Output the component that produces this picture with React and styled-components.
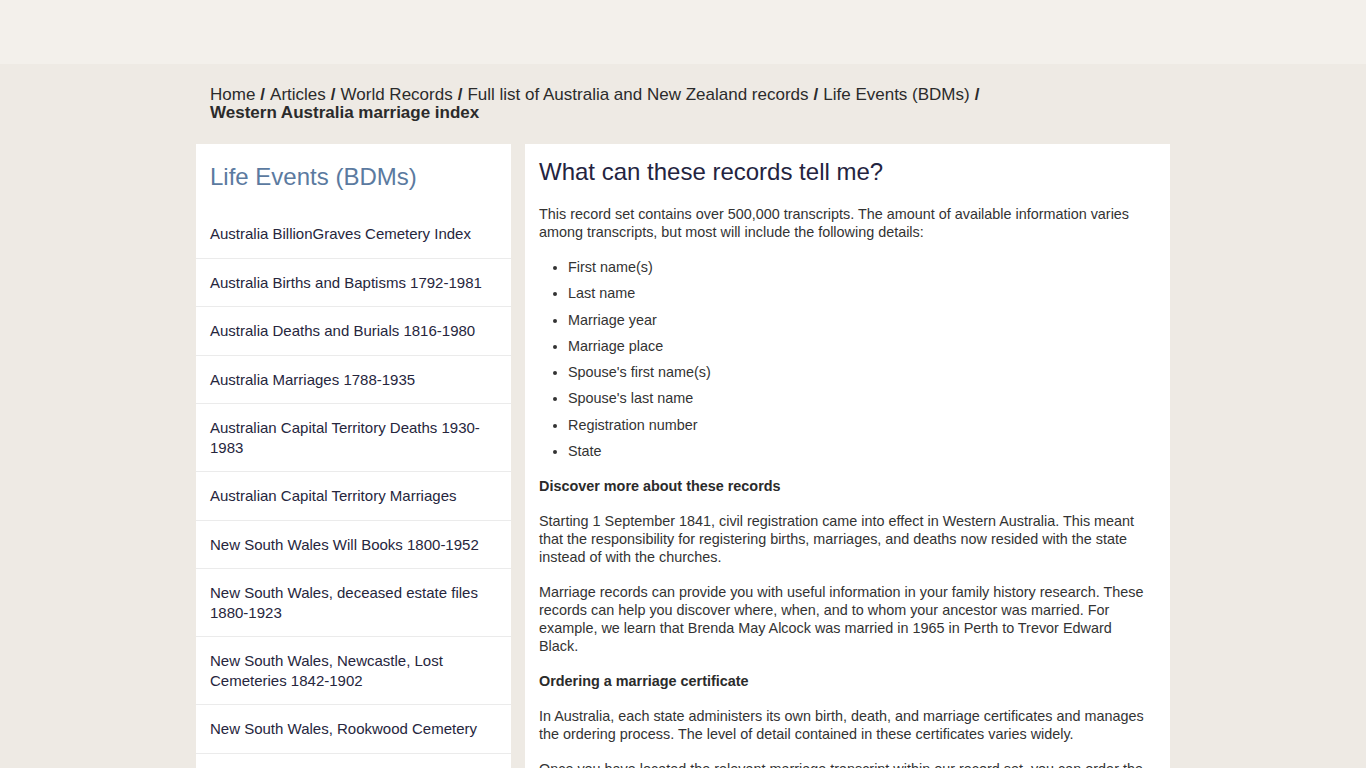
import React from "react";
import styled, { createGlobalStyle } from "styled-components";

const GlobalStyle = createGlobalStyle`
  html, body {
    margin: 0;
    padding: 0;
    background: #eeeae4;
    font-family: "Liberation Sans", Arial, sans-serif;
    color: #333;
  }
  * { box-sizing: border-box; }
`;

const TopBar = styled.header`
  height: 64px;
  background: #f3f0eb;
`;

const Container = styled.div`
  width: 974px;
  margin: 0 auto;
`;

const Crumbs = styled.nav`
  padding: 22px 14px 0;
  font-size: 17px;
  line-height: 18px;
  color: #2b2b2b;
  a {
    color: #2b2b2b;
    text-decoration: none;
  }
  strong {
    font-weight: bold;
  }
`;

const Sep = styled.b`
  margin: 0 5px;
`;

const Columns = styled.div`
  display: flex;
  gap: 14px;
  margin-top: 22px;
  align-items: flex-start;
`;

const Sidebar = styled.aside`
  width: 315px;
  flex-shrink: 0;
  background: #fff;
`;

const SideTitle = styled.h2`
  margin: 0;
  padding: 19px 14px;
  font-size: 24px;
  line-height: 28px;
  font-weight: normal;
  color: #5b7aa0;
`;

const SideList = styled.ul`
  list-style: none;
  margin: 0;
  padding: 0;
`;

const SideItem = styled.li`
  padding: 14px;
  font-size: 15px;
  line-height: 19.5px;
  color: #26263d;
  border-bottom: 1px solid #ebebeb;
`;

const Main = styled.main`
  flex: 1;
  background: #fff;
  padding: 14px 19px 30px 14px;
  font-size: 14.4px;
  line-height: 18px;
  color: #333;
`;

const Heading = styled.h1`
  margin: 0 0 19px;
  font-size: 24px;
  line-height: 28px;
  font-weight: normal;
  color: #24243f;
`;

const Para = styled.p`
  margin: 0 0 17px;
`;

const SubHead = styled.p`
  margin: 0 0 17px;
  font-weight: bold;
  color: #2b2b2b;
`;

const Bullets = styled.ul`
  margin: 0 0 17px;
  padding-left: 29px;
  li {
    margin-bottom: 8.3px;
  }
  li:last-child {
    margin-bottom: 0;
  }
`;

const crumbs = [
  "Home",
  "Articles",
  "World Records",
  "Full list of Australia and New Zealand records",
  "Life Events (BDMs)",
];

const sideItems = [
  "Australia BillionGraves Cemetery Index",
  "Australia Births and Baptisms 1792-1981",
  "Australia Deaths and Burials 1816-1980",
  "Australia Marriages 1788-1935",
  "Australian Capital Territory Deaths 1930-1983",
  "Australian Capital Territory Marriages",
  "New South Wales Will Books 1800-1952",
  "New South Wales, deceased estate files 1880-1923",
  "New South Wales, Newcastle, Lost Cemeteries 1842-1902",
  "New South Wales, Rookwood Cemetery",
  "Northern Territory Deaths",
  "Queensland Marriages",
];

const details = [
  "First name(s)",
  "Last name",
  "Marriage year",
  "Marriage place",
  "Spouse's first name(s)",
  "Spouse's last name",
  "Registration number",
  "State",
];

export default function App() {
  return (
    <>
      <GlobalStyle />
      <TopBar />
      <Container>
        <Crumbs>
          {crumbs.map((c) => (
            <React.Fragment key={c}>
              <a href="#">{c}</a>
              <Sep>/</Sep>
            </React.Fragment>
          ))}
          <br />
          <strong>Western Australia marriage index</strong>
        </Crumbs>
        <Columns>
          <Sidebar>
            <SideTitle>Life Events (BDMs)</SideTitle>
            <SideList>
              {sideItems.map((s) => (
                <SideItem key={s}>{s}</SideItem>
              ))}
            </SideList>
          </Sidebar>
          <Main>
            <Heading>What can these records tell me?</Heading>
            <Para>
              This record set contains over 500,000 transcripts. The amount of available information varies
              among transcripts, but most will include the following details:
            </Para>
            <Bullets>
              {details.map((d) => (
                <li key={d}>{d}</li>
              ))}
            </Bullets>
            <SubHead>Discover more about these records</SubHead>
            <Para>
              Starting 1 September 1841, civil registration came into effect in Western Australia. This meant
              that the responsibility for registering births, marriages, and deaths now resided with the state
              instead of with the churches.
            </Para>
            <Para>
              Marriage records can provide you with useful information in your family history research. These
              records can help you discover where, when, and to whom your ancestor was married. For
              example, we learn that Brenda May Alcock was married in 1965 in Perth to Trevor Edward
              Black.
            </Para>
            <SubHead>Ordering a marriage certificate</SubHead>
            <Para>
              In Australia, each state administers its own birth, death, and marriage certificates and manages
              the ordering process. The level of detail contained in these certificates varies widely.
            </Para>
            <Para>
              Once you have located the relevant marriage transcript within our record set, you can order the
              certificate from the Western Australia Registry of Births, Deaths and Marriages.
            </Para>
          </Main>
        </Columns>
      </Container>
    </>
  );
}
